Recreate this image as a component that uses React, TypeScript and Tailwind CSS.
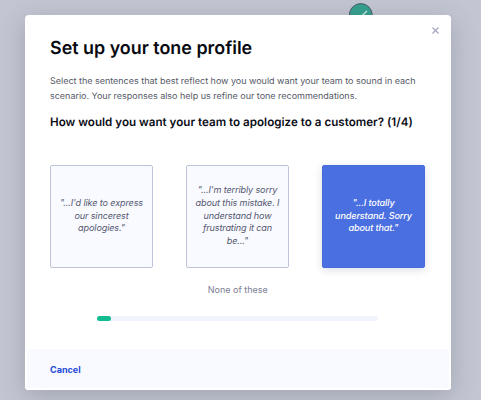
import React from "react";

const options = [
  { lines: ['"...I\'d like to express', "our sincerest", 'apologies."'], selected: false },
  {
    lines: ['"...I\'m terribly sorry', "about this mistake. I", "understand how", "frustrating it can", 'be..."'],
    selected: false,
  },
  { lines: ['"...I totally', "understand. Sorry", 'about that."'], selected: true },
];

function ToneCard({ lines, selected }: { lines: string[]; selected: boolean }) {
  return (
    <button
      className={
        "flex h-[103px] w-[103px] flex-col items-center justify-center rounded-[2px] border pb-px text-[9.1px] leading-[12.8px] italic whitespace-nowrap " +
        (selected
          ? "border-[#456bdd] bg-[#4a6fe0] font-medium tracking-[-0.13px] text-white shadow-[0_2px_8px_rgba(40,50,100,0.16)]"
          : "border-[#bfc4d8] bg-[#f9faff] tracking-[-0.13px] text-[#555870]")
      }
    >
      {lines.map((line) => (
        <span key={line}>{line}</span>
      ))}
    </button>
  );
}

export default function App() {
  return (
    <div className="relative h-[400px] w-[481px] overflow-hidden bg-[#c3c6d2] pt-[14.5px] pl-[25px] font-['Inter',sans-serif] [text-rendering:geometricPrecision]">
      <svg className="absolute top-[3px] left-[348px]" width="26" height="26" viewBox="0 0 26 26" fill="none">
        <circle cx="12.8" cy="12" r="11.4" fill="#36a18e" stroke="#4c5969" />
        <path d="M13.3 13l2.3-1.8L19 8" stroke="#d8eee9" strokeWidth="1.2" />
      </svg>
      <main className="relative flex h-[375px] w-[425.5px] flex-col overflow-hidden rounded-[4px] bg-white shadow-[0_6px_26px_rgba(50,53,75,0.24)]">
        <section className="flex h-[334px] flex-col pt-[22px] pr-[25px] pl-[25px]">
          <h1 className="text-[17.9px] leading-6 font-semibold whitespace-nowrap text-[#080a12]">
            Set up your tone profile
          </h1>
          <p className="mt-[13.5px] text-[9px] leading-[15.4px] tracking-[-0.015px] whitespace-nowrap text-[#565966]">
            Select the sentences that best reflect how you would want your team to sound in each
            <br />
            scenario. Your responses also help us refine our tone recommendations.
          </p>
          <h2 className="mt-[9px] text-[11.6px] leading-4 font-semibold tracking-[0.02px] whitespace-nowrap text-[#0b0d17]">
            How would you want your team to apologize to a customer? (1/4)
          </h2>
          <div className="mt-[35.2px] flex w-[375px] justify-between">
            {options.map((option) => (
              <ToneCard key={option.lines[0]} {...option} />
            ))}
          </div>
          <button className="mt-[16px] self-center text-[9px] leading-3 text-[#7b7e92]">None of these</button>
          <div className="mt-[20px] h-[5px] w-[281px] self-center rounded-full bg-[#f1f3fd]">
            <div className="h-full w-[14px] rounded-full bg-[#12bd91]" />
          </div>
        </section>
        <footer className="flex flex-1 items-center border-x-2 border-b-2 border-white bg-[#f9faff] pl-[23px]">
          <button className="mt-[3px] text-[9px] leading-3 font-bold text-[#244bd8]">Cancel</button>
        </footer>
        <button aria-label="Close" className="absolute top-[12px] right-[12px]">
          <svg width="7" height="7" viewBox="0 0 7 7" fill="none" stroke="#a0a2bc" strokeWidth="1.1">
            <path d="M.5.5l6 6m0-6l-6 6" />
          </svg>
        </button>
      </main>
    </div>
  );
}
